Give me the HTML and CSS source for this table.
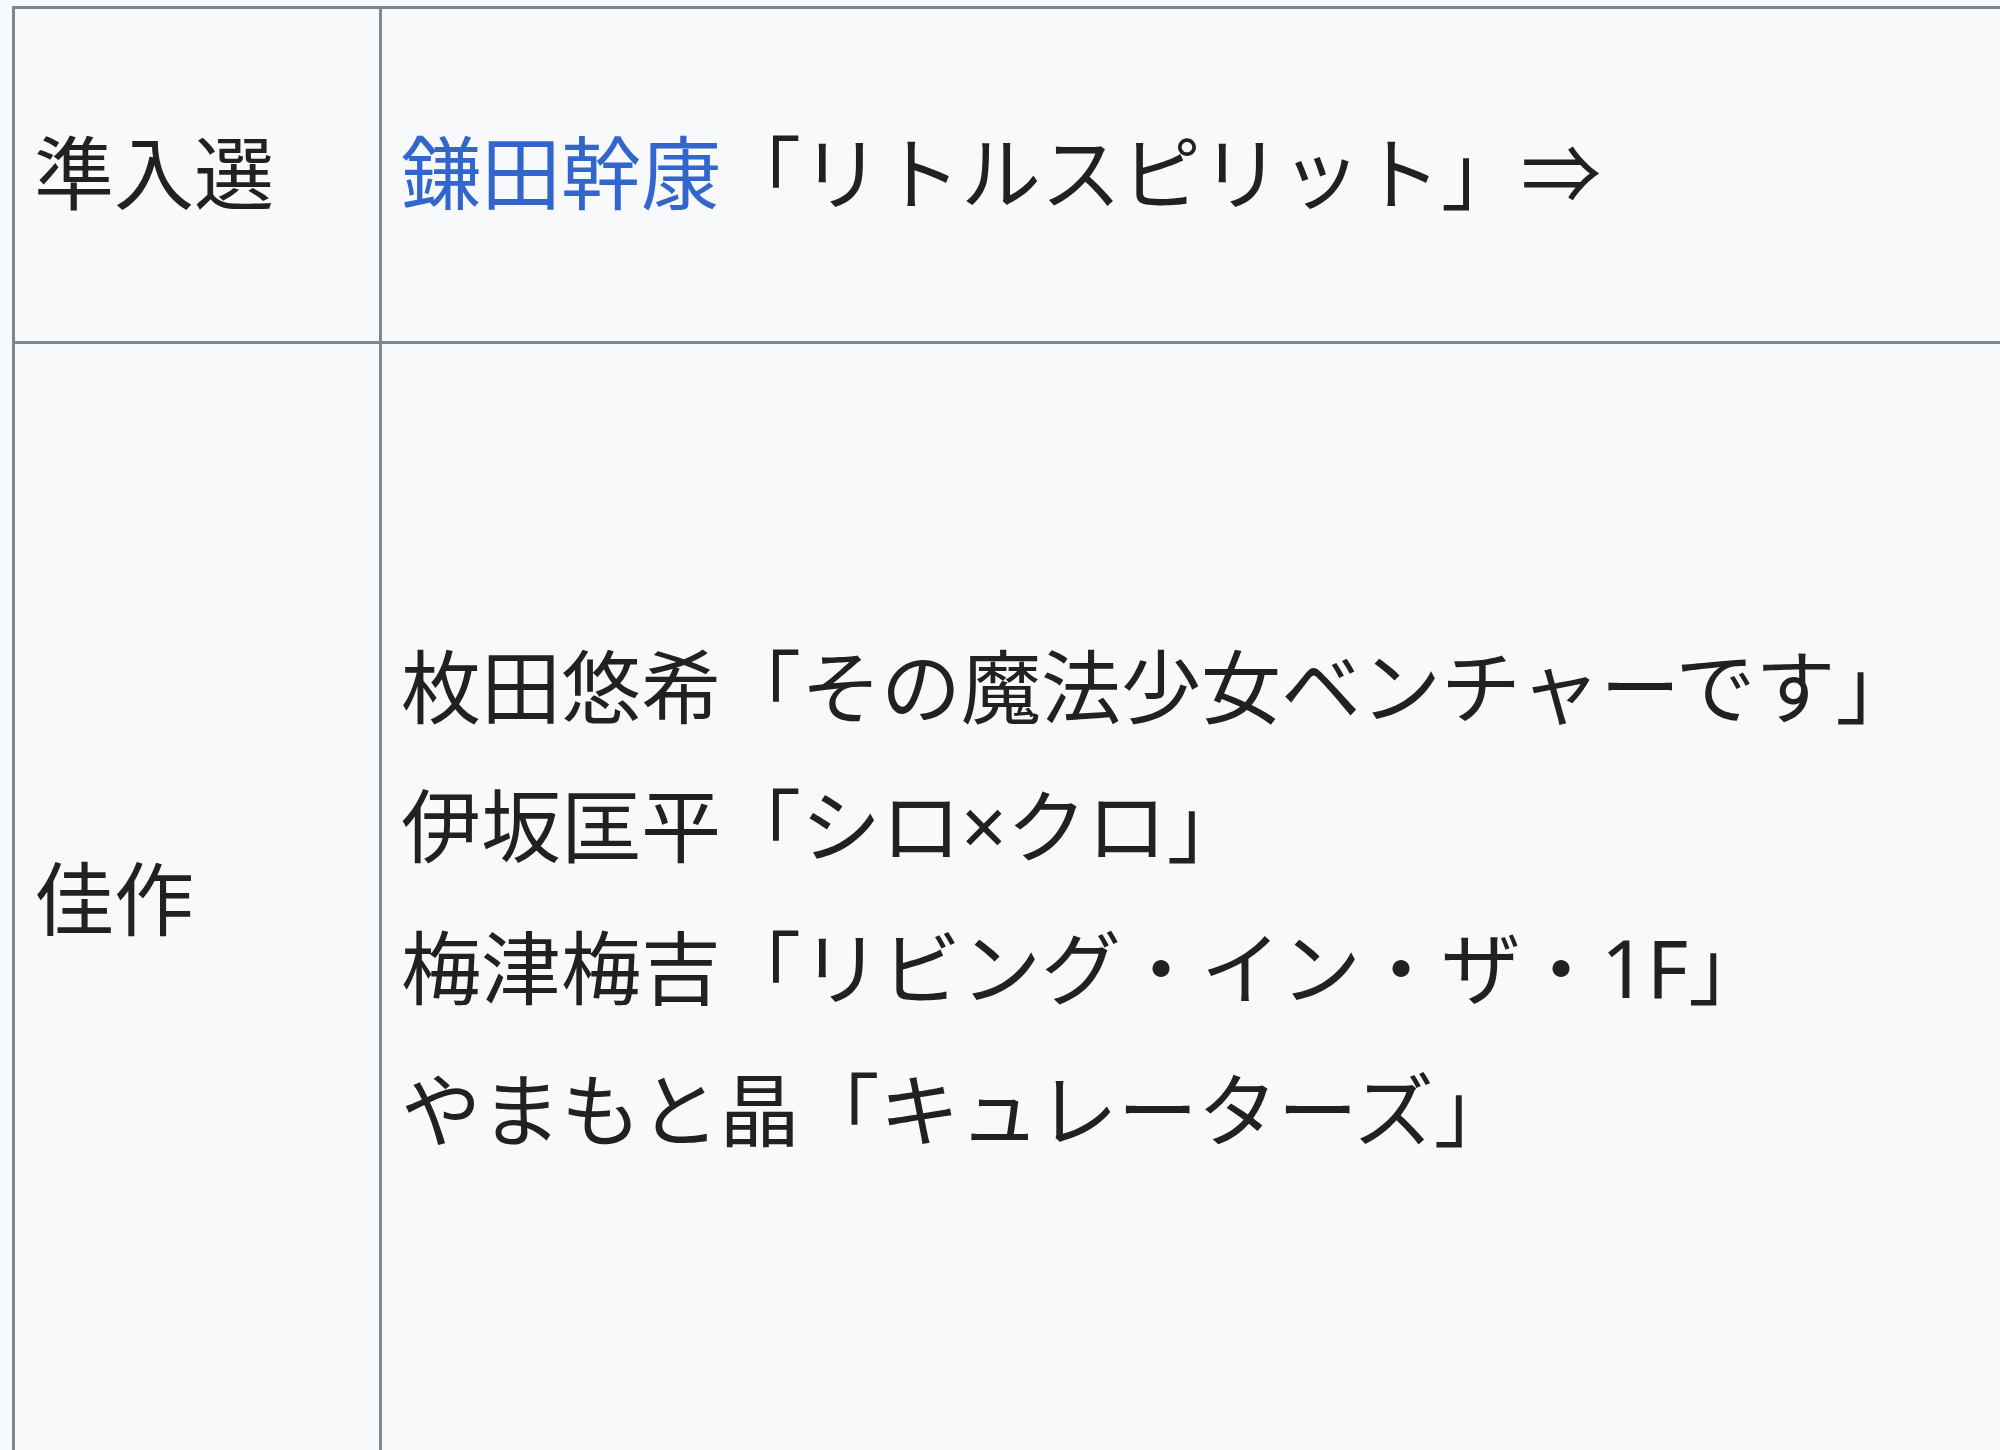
FILE: index.html
```html
<!DOCTYPE html>
<html lang="ja">
<head>
    <meta charset="UTF-8">
    <meta name="viewport" content="width=device-width, initial-scale=1.0">
    <title>受賞作</title>
    <link rel="stylesheet" href="styles.css">
</head>
<body>
    <table class="award-table">
        <tr class="row-short">
            <th class="label">準入選</th>
            <td class="works"><a href="#">鎌田幹康</a>「リトルスピリット」⇒</td>
        </tr>
        <tr class="row-tall">
            <th class="label">佳作</th>
            <td class="works">
                枚田悠希「その魔法少女ベンチャーです」<br>
                伊坂匡平「シロ<span class="latin">×</span>クロ」<br>
                梅津梅吉「リビング・イン・ザ・<span class="latin">1F</span>」<br>
                やまもと晶「キュレーターズ」
            </td>
        </tr>
    </table>
</body>
</html>
```

FILE: styles.css
```css
body {
    margin: 0;
    padding: 0;
    background-color: #f8f9fa;
    font-family: "Noto Sans CJK JP", "Noto Sans", sans-serif;
    color: #202122;
    overflow: hidden;
}

.award-table {
    border-collapse: collapse;
    margin: 6px 0 0 12px;
    width: 2400px;
    font-size: 80px;
    line-height: 139px;
}

.award-table th,
.award-table td {
    border: 3px solid #80868f;
    padding: 0 19px 14px 19px;
    vertical-align: middle;
    text-align: left;
    font-weight: normal;
}

.label {
    width: 326px;
}

.row-short td,
.row-short th {
    height: 318px;
}

.row-tall td,
.row-tall th {
    height: 1100px;
    padding-bottom: 44px;
}

.works a {
    color: #3366cc;
    text-decoration: none;
}

.latin {
    font-family: "Noto Sans", sans-serif;
}
```
